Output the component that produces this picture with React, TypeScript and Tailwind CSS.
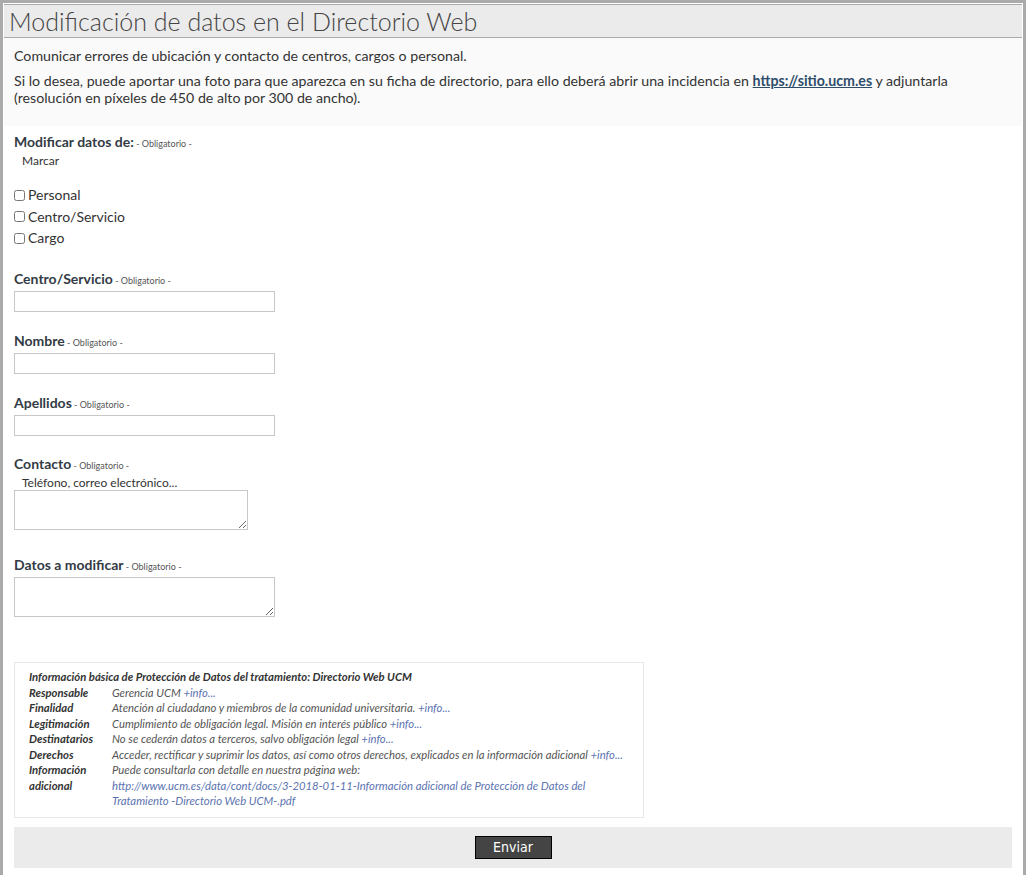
const font = { fontFamily: "Lato, 'Open Sans', sans-serif" };

function Req() {
  return <span className="text-[9px] font-normal text-[#555]"> - Obligatorio -</span>;
}

function Label({ children }: { children: React.ReactNode }) {
  return (
    <div className="text-[14px] font-bold leading-[18px] text-[#333b45]">
      {children}
      <Req />
    </div>
  );
}

const rows: { k: string; v: string; info?: boolean }[] = [
  { k: "Responsable", v: "Gerencia UCM ", info: true },
  { k: "Finalidad", v: "Atención al ciudadano y miembros de la comunidad universitaria.", info: true },
  { k: "Legitimación", v: "Cumplimiento de obligación legal. Misión en interés público ", info: true },
  { k: "Destinatarios", v: "No se cederán datos a terceros, salvo obligación legal ", info: true },
  { k: "Derechos", v: "Acceder, rectificar y suprimir los datos, así como otros derechos, explicados en la información adicional ", info: true },
];

export default function App() {
  return (
    <div className="min-h-[875px] w-[1028px] bg-white text-[#333]" style={font}>
      <div className="w-[1026px] border-[3px] border-b-0 border-[#aaa] p-px min-h-[875px]">
        <div className="border-y border-[#aaa] bg-[#ebebeb] px-[5px] pb-[2px] pt-[2px]">
          <h1 className="text-[25px] font-light leading-[28px] text-[#444]">
            Modificación de datos en el Directorio Web
          </h1>
        </div>
        <div className="bg-[#fafafa] pl-[10px] pr-[24px] pb-[20px] pt-[9px] text-[14.2px] leading-[17px] text-[#333]">
          <p>Comunicar errores de ubicación y contacto de centros, cargos o personal.</p>
          <p className="mt-[8px]">
            Si lo desea, puede aportar una foto para que aparezca en su ficha de directorio, para ello deberá abrir una incidencia en{" "}
            <a className="font-bold text-[#2d4d6b] underline">https://sitio.ucm.es</a> y adjuntarla (resolución en píxeles de 450 de alto por 300 de ancho).
          </p>
        </div>

        <div className="px-[10px] pt-[7px]">
          <Label>Modificar datos de:</Label>
          <div className="pl-[8px] text-[12px] leading-[16px] text-[#333]">Marcar</div>
          <div className="mt-[17px] flex flex-col gap-[3.5px] text-[14px] leading-[18px]">
            {["Personal", "Centro/Servicio", "Cargo"].map((t) => (
              <label key={t} className="flex items-center gap-[3px]">
                <input type="checkbox" className="m-0 h-[11px] w-[11px]" />
                {t}
              </label>
            ))}
          </div>

          <div className="mt-[23px]">
            <Label>Centro/Servicio</Label>
            <input className="mt-px block h-[21px] w-[261px] border border-[#c8c8c8] bg-white" />
          </div>
          <div className="mt-[20px]">
            <Label>Nombre</Label>
            <input className="mt-px block h-[21px] w-[261px] border border-[#c8c8c8] bg-white" />
          </div>
          <div className="mt-[20px]">
            <Label>Apellidos</Label>
            <input className="mt-px block h-[21px] w-[261px] border border-[#c8c8c8] bg-white" />
          </div>
          <div className="mt-[19px]">
            <Label>Contacto</Label>
            <div className="pl-[8px] text-[12px] leading-[15px] text-[#333]">Teléfono, correo electrónico...</div>
            <textarea className="block h-[40px] w-[234px] border border-[#c8c8c8] bg-white" />
          </div>
          <div className="mt-[26px]">
            <Label>Datos a modificar</Label>
            <textarea className="mt-px block h-[40px] w-[261px] border border-[#c8c8c8] bg-white" />
          </div>

          <div className="mt-[45px] w-[630px] border border-[#e6e6e6] px-[14px] pb-[8px] pt-[6px] text-[11.3px] italic leading-[15.5px] text-[#555]">
            <div className="font-bold text-[#333]">
              Información básica de Protección de Datos del tratamiento: Directorio Web UCM
            </div>
            {rows.map((r) => (
              <div key={r.k} className="flex">
                <div className="w-[83px] shrink-0 font-bold text-[#333]">{r.k}</div>
                <div>
                  {r.v} {r.info && <span className="text-[#5b73b0]">+info...</span>}
                </div>
              </div>
            ))}
            <div className="flex">
              <div className="w-[83px] shrink-0 font-bold text-[#333]">
                Información
                <br />
                adicional
              </div>
              <div>
                Puede consultarla con detalle en nuestra página web:
                <br />
                <span className="text-[#5b73b0]">
                  http://www.ucm.es/data/cont/docs/3-2018-01-11-Información adicional de Protección de Datos del Tratamiento -Directorio Web UCM-.pdf
                </span>
              </div>
            </div>
          </div>

          <div className="mt-[9px] flex w-[998px] justify-center bg-[#ebebeb] py-[9px]">
            <button
              className="h-[23px] w-[77px] border border-black bg-[#444] text-[14px] text-white"
              style={{ fontFamily: "'DejaVu Sans Condensed', 'Liberation Sans Narrow', sans-serif", fontStretch: "condensed" }}
            >
              Enviar
            </button>
          </div>
        </div>
      </div>
    </div>
  );
}
